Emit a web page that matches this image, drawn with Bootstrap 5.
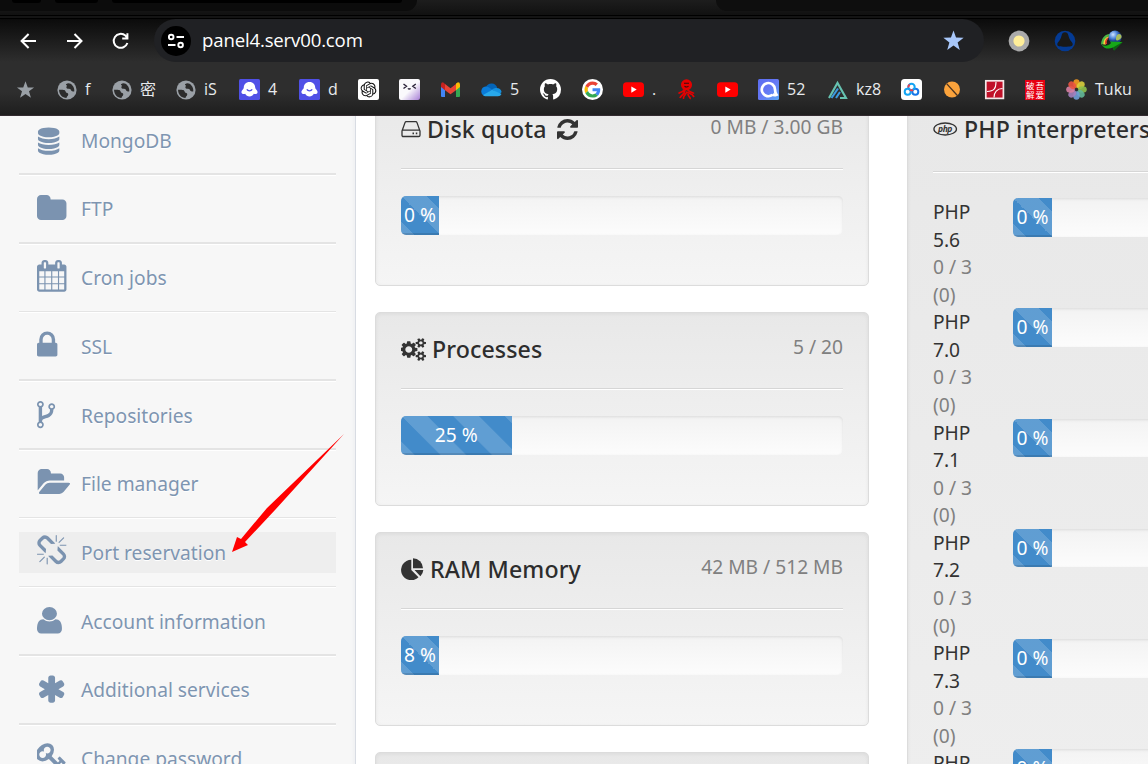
<!DOCTYPE html>
<html lang="en">
<head>
<meta charset="utf-8">
<title>panel4.serv00.com</title>
<link href="https://cdn.jsdelivr.net/npm/bootstrap@5.3.0/dist/css/bootstrap.min.css" rel="stylesheet">
<style>
body{width:1148px;height:764px;overflow:hidden;background:#fff;font-family:"Noto Sans","Noto Sans CJK SC",sans-serif;font-size:19.2px;line-height:27.57px;color:#333}
svg{display:block;flex:none}
.chrome{height:116px;background:linear-gradient(#0b0b0b 19px,#2e2e2e 62px,#2e2e2e 92px,#1e1e1e 115px,#332b30 115px);font-family:"Open Sans","Noto Sans CJK SC",sans-serif;color:#e8eaed}
.tabstrip{height:19px;background:linear-gradient(#1d1d1d,#111 15px,#000 15px,#000 16px,#141414 16px,#141414 18px,#000 18px);overflow:hidden}
.tab-a{width:417px;height:11px;background:#0c0c0c;border-bottom-right-radius:12px;padding-left:12px;gap:14px}
.tab-a i{height:3px;background:#000;border-radius:0 0 8px 8px}
.tab-a i:nth-child(1){width:29px}.tab-a i:nth-child(2){width:43px}.tab-a i:nth-child(3){width:290px}
.tab-b{width:432px;height:11px;background:#0e0e0e;border-bottom-left-radius:12px}
.toolbar{height:43px;padding-left:18px}
.reload{margin-left:25px}
.ext{margin-left:24px}
.omnibox{width:830px;height:43px;background:#202124;border-radius:22px;margin-left:23px;padding:0 20px 0 7px}
.site{width:30px;height:30px;border-radius:50%;background:#000}
.url{font-size:18.6px;line-height:41px;height:43px;margin-left:11px;color:#fff;letter-spacing:-.16px}
.marks{display:grid;grid-template-columns:42px 55px 64px 63px 60px 59px 41px 41px 41px 59px 42px 41px 54px 40px 41px 69px 74px 41px 42px 41px 41px 82px;padding:1px 0 0 15px;height:54px}
.marks>div{display:flex;align-items:center;gap:8px;font-size:16px;line-height:24px;white-space:nowrap}
.marks span{margin-top:-1px}
.viewport{height:648px;overflow:hidden}
.side{width:356px;background:#f7f7f7;border-right:1px solid #d8dce3;box-shadow:inset -5px 0 4px -4px #eceef1;padding:0 19px;height:700px}
.side ul{margin-top:-11.53px}
.side .rule{height:2.55px;background:#e4e4e4;border-bottom:1px solid #fff;width:317px}
.side .entry{height:66.195px;width:317px;padding:12.2px 0 12.7px}
.side a{height:41.25px;padding-left:18px;gap:10px;color:#7e95b1;text-decoration:none;text-shadow:0 1px 0 #fff}
.side a.hot{background:#eee}
.side a svg{fill:#7b93b0}
.side a span{padding-top:1px}
.box{background:linear-gradient(#e8e8e8,#f5f5f5);border:1px solid #dcdcdc;border-radius:5px;box-shadow:inset 0 1px 4px rgba(0,0,0,.06);padding:0 25px}
.mid{width:494px;margin:-24px 0 0 19px}
.mid .box{height:194px;margin-bottom:26px}
.php{width:420px;margin:-24px 0 0 38px;flex:none}
.php .box{height:1500px}
.head{height:76px;border-bottom:1px solid #d6d6d6;box-shadow:0 1px 0 #fff;padding-top:20px}
.head h3{font-size:23.2px;font-weight:500;line-height:32px;height:32px;margin:0;gap:6px;color:#2d2d2d;letter-spacing:.1px;white-space:nowrap}
.head .amt{color:#808080;line-height:28px}
.meter{height:38.5px;background:linear-gradient(#f3f3f3,#fcfcfc);border-radius:5px;box-shadow:inset 0 1px 3px rgba(0,0,0,.1);overflow:hidden}
.mid .meter{margin-top:27px}
.fillbar{min-width:38px;background:#428bca linear-gradient(45deg,rgba(255,255,255,.16) 25%,transparent 25%,transparent 50%,rgba(255,255,255,.16) 50%,rgba(255,255,255,.16) 75%,transparent 75%) 0 0/51.6px 51.6px;box-shadow:inset 0 -2px 0 rgba(0,0,0,.12);color:#fff;text-align:center;line-height:38px}
.mid .fillbar{line-height:37px}
.php .fillbar{min-width:39px}
.php .head{height:79px}
.php .rowx{height:110.3px;gap:33px}
.php .lbl{width:47px;flex:none;color:#333}
.php .lbl span{color:#808080}
.php .rows{padding-top:26px}
.php .meter{width:260px;flex:none}
.arrow{position:absolute;left:225px;top:428px}
</style>
</head>
<body>
<header class="chrome">
  <div class="tabstrip d-flex justify-content-between"><div class="tab-a d-flex"><i></i><i></i><i></i></div><div class="tab-b"></div></div>
  <div class="toolbar d-flex align-items-center">
    <svg width="21" height="21" viewBox="0 0 21 21" fill="none" stroke="#fff" stroke-width="2"><path d="M18 11H4M10.600 4L3.600 11l7 7"/></svg>
    <svg class="ms-4" width="22" height="21" viewBox="0 0 22 21" fill="none" stroke="#fff" stroke-width="2"><path d="M4 11h14M11.500 4l7 7-7 7"/></svg>
    <svg class="reload" width="21" height="21" viewBox="0 0 21 21" fill="none" stroke="#fff" stroke-width="2"><path d="M17.400 13A7 7 0 1 1 15.400 5.600L17 7.500M17.400 3.200v5.200h-5.200"/></svg>
    <div class="omnibox d-flex align-items-center">
      <div class="site d-flex align-items-center justify-content-center"><svg width="18" height="16" viewBox="0 0 18 16" fill="none" stroke="#fff" stroke-width="1.900"><circle cx="4.200" cy="4" r="2.300"/><path d="M9.500 4H17M1 12h7.500"/><circle cx="13.600" cy="12" r="2.300"/></svg></div>
      <div class="url">panel4.serv00.com</div>
      <svg class="ms-auto" width="21" height="21" viewBox="0 0 24 24" fill="#a8c7fa"><path d="M12 .6l2.900 8 8.700.2-6.900 5.400 2.500 8.600-7.200-5-7.200 5 2.500-8.600L.4 8.800l8.700-.2z"/></svg>
    </div>
    <svg class="ext" width="22" height="22" viewBox="0 0 22 22"><circle cx="11" cy="11" r="10.400" fill="#aaa"/><circle cx="11" cy="11" r="5.600" fill="#ffee99"/></svg>
    <svg class="ext" width="22" height="22" viewBox="0 0 22 22"><circle cx="11" cy="11" r="10.300" fill="#043a93"/><path d="M11 2.300c2 0 2.800 1.200 3.400 3.200.8 3 1.400 4.400 3.300 6.500 1.600 1.800 1.300 3.800-.7 4.300-2.400.6-9.600.6-12 0-2-.5-2.300-2.500-.7-4.300 1.900-2.100 2.500-3.500 3.300-6.500.6-2 1.400-3.200 3.400-3.200z" fill="#191919"/></svg>
    <svg class="ext" width="23" height="22" viewBox="0 0 23 22"><defs><radialGradient id="earth" cx=".35" cy=".3"><stop stop-color="#cfe4ff"/><stop offset=".6" stop-color="#4f86d9"/><stop offset="1" stop-color="#1c3f8c"/></radialGradient></defs><circle cx="15" cy="7.200" r="6.600" fill="url(#earth)"/><path d="M17 5c2-2 4-1 4.500 1s-2 4-4 4.500-2-3-.5-5.500z" fill="#a9bd5c"/><path d="M1 14.500C1.500 7.500 5.500 4 9.500 4L8.700 6C5 7.500 4.500 11 4.500 14z" fill="#4db848"/><path d="M3.400 14.500c0-4.500 2-7.300 5.400-8.300l-.4 1.600c-2 1-3 3.700-2.400 6.700z" fill="#f0d83a"/><path d="M5 14c-.4-3.500 1-5.700 3.400-6.700L8 9c-1.200 1-1.600 3-1 5z" fill="#e5452b"/><path d="M1.500 14.500c3 2 7 1.500 9.500-1.500l-1-1.500 12.500.5-8.500 8.500-1-3c-4 2-9 1.500-11.500-3z" fill="#16a818"/><path d="M13 17.500l9.500-5.500-8.500 8.500z" fill="#0a6410"/></svg>
  </div>
  <nav class="marks">
    <div><svg width="21" height="21" viewBox="0 0 24 24" fill="#9aa0a6"><path d="M12 2.600l2.600 7h7.200l-5.800 4.500 2.200 7.200-6.200-4.300-6.200 4.300L8 14.100 2.200 9.600h7.200z"/></svg></div>
    <div><svg width="20" height="20" viewBox="0 0 20 20"><use href="#globe"/></svg><span>f</span></div>
    <div><svg width="20" height="20" viewBox="0 0 20 20"><use href="#globe"/></svg><span>密</span></div>
    <div><svg width="20" height="20" viewBox="0 0 20 20"><use href="#globe"/></svg><span>iS</span></div>
    <div><svg width="21" height="21" viewBox="0 0 21 21"><use href="#ghost"/></svg><span>4</span></div>
    <div><svg width="21" height="21" viewBox="0 0 21 21"><use href="#ghost"/></svg><span>d</span></div>
    <div><svg width="21" height="21" viewBox="-4 -4 32 32"><rect x="-4" y="-4" width="32" height="32" rx="3" fill="#fff"/><path d="M22.2819 9.8211a5.9847 5.9847 0 0 0-.5157-4.9108 6.0462 6.0462 0 0 0-6.5098-2.9A6.0651 6.0651 0 0 0 4.9807 4.1818a5.9847 5.9847 0 0 0-3.9977 2.9 6.0462 6.0462 0 0 0 .7427 7.0966 5.98 5.98 0 0 0 .511 4.9107 6.051 6.051 0 0 0 6.5146 2.9001A5.9847 5.9847 0 0 0 13.2599 24a6.0557 6.0557 0 0 0 5.7718-4.2058 5.9894 5.9894 0 0 0 3.9977-2.9001 6.0557 6.0557 0 0 0-.7475-7.0729zm-9.022 12.6081a4.4755 4.4755 0 0 1-2.8764-1.0408l.1419-.0804 4.7783-2.7582a.7948.7948 0 0 0 .3927-.6813v-6.7369l2.02 1.1686a.071.071 0 0 1 .038.052v5.5826a4.504 4.504 0 0 1-4.4945 4.4944zm-9.6607-4.1254a4.4708 4.4708 0 0 1-.5346-3.0137l.142.0852 4.783 2.7582a.7712.7712 0 0 0 .7806 0l5.8428-3.3685v2.3324a.0804.0804 0 0 1-.0332.0615L9.74 19.9502a4.4992 4.4992 0 0 1-6.1408-1.6464zM2.3408 7.8956a4.485 4.485 0 0 1 2.3655-1.9728V11.6a.7664.7664 0 0 0 .3879.6765l5.8144 3.3543-2.0201 1.1685a.0757.0757 0 0 1-.071 0l-4.8303-2.7865A4.504 4.504 0 0 1 2.3408 7.872zm16.5963 3.8558L13.1038 8.364 15.1192 7.2a.0757.0757 0 0 1 .071 0l4.8303 2.7913a4.4944 4.4944 0 0 1-.6765 8.1042v-5.6772a.79.79 0 0 0-.407-.667zm2.0107-3.0231l-.142-.0852-4.7735-2.7818a.7759.7759 0 0 0-.7854 0L9.409 9.2297V6.8974a.0662.0662 0 0 1 .0284-.0615l4.8303-2.7866a4.4992 4.4992 0 0 1 6.6802 4.66zM8.3065 12.863l-2.02-1.1638a.0804.0804 0 0 1-.038-.0567V6.0742a4.4992 4.4992 0 0 1 7.3757-3.4537l-.142.0805L8.704 5.459a.7948.7948 0 0 0-.3927.6813zm1.0976-2.3654l2.602-1.4998 2.6069 1.4998v2.9994l-2.5974 1.4997-2.6067-1.4997Z" fill="#111"/></svg></div>
    <div><svg width="21" height="21" viewBox="0 0 21 21"><defs><linearGradient id="lav" x1=".4" y1=".4" x2="1" y2="1"><stop offset=".2" stop-color="#faf9fc"/><stop offset="1" stop-color="#a77fd6"/></linearGradient></defs><rect width="21" height="21" rx="2" fill="url(#lav)"/><path d="M4.500 5l3 2.300-3 2.200M16.800 5l-3 2.300 3 2.200M9 9.300c.6 1 1.900 1 2.500 0" fill="none" stroke="#2a2238" stroke-width="1.400"/></svg></div>
    <div><svg width="21" height="21" viewBox="0 0 21 21"><path d="M1 6v11q0 1 1 1h3V9z" fill="#4285f4"/><path d="M20 6v11q0 1-1 1h-3V9z" fill="#34a853"/><path d="M16 4.500l2-1.200q2 0 2 2.200V8l-4 3.200z" fill="#fbbc04"/><path d="M5 11.200V5l5.500 4.200L16 5v6.200l-5.500 4z" fill="#ea4335"/><path d="M1 8V5.500Q1 3.300 3 3.300L5 5v6.200z" fill="#c5221f"/></svg></div>
    <div><svg width="21" height="21" viewBox="0 0 21 21"><path d="M5 8a6 6 0 0 1 11.200.6L11 13z" fill="#0364b8"/><path d="M4.500 7.600c2 0 3 .6 6.500 3L3 17A5 5 0 0 1 4.500 7.600z" fill="#0a7bd8"/><path d="M11 10.500c2-2 9-3 9.600 2.500L18 16z" fill="#1490df"/><path d="M2.200 16L11 10.800 20.500 15q-1 2.300-3.500 2.300H4.500q-1.500 0-2.300-1.300z" fill="#28a8ea"/></svg><span>5</span></div>
    <div><svg width="21" height="21" viewBox="0 0 16 16" fill="#fff"><path d="M8 0C3.580 0 0 3.580 0 8c0 3.540 2.290 6.530 5.470 7.590.4.070.55-.17.55-.38 0-.19-.01-.82-.01-1.490-2.010.37-2.530-.49-2.690-.94-.09-.23-.48-.94-.82-1.130-.28-.15-.68-.52-.01-.53.63-.01 1.080.58 1.230.82.720 1.210 1.870.87 2.330.66.07-.52.28-.87.51-1.070-1.780-.2-3.640-.89-3.640-3.950 0-.87.31-1.590.82-2.150-.08-.2-.36-1.020.08-2.120 0 0 .67-.21 2.200.82.64-.18 1.320-.27 2-.27s1.360.09 2 .27c1.530-1.040 2.200-.82 2.200-.82.44 1.100.16 1.920.08 2.120.51.56.82 1.270.82 2.150 0 3.070-1.870 3.750-3.650 3.950.29.25.54.73.54 1.480 0 1.070-.01 1.930-.01 2.200 0 .21.15.46.55.38A8.010 8.010 0 0 0 16 8c0-4.420-3.580-8-8-8z"/></svg></div>
    <div><svg width="21" height="21" viewBox="0 0 42 42"><circle cx="21" cy="21" r="21" fill="#fff"/><g transform="translate(5 5) scale(.67)"><path fill="#EA4335" d="M24 9.500c3.540 0 6.710 1.220 9.210 3.600l6.850-6.850C35.900 2.380 30.470 0 24 0 14.620 0 6.510 5.380 2.560 13.220l7.980 6.190C12.430 13.720 17.740 9.500 24 9.500z"/><path fill="#4285F4" d="M46.980 24.550c0-1.570-.15-3.090-.38-4.550H24v9.020h12.940c-.58 2.960-2.260 5.480-4.780 7.180l7.730 6c4.510-4.180 7.090-10.360 7.090-17.650z"/><path fill="#FBBC05" d="M10.530 28.590c-.48-1.450-.76-2.990-.76-4.590s.27-3.140.76-4.590l-7.980-6.190C.92 16.460 0 20.120 0 24c0 3.880.92 7.540 2.560 10.780l7.970-6.190z"/><path fill="#34A853" d="M24 48c6.480 0 11.930-2.130 15.890-5.810l-7.730-6c-2.150 1.450-4.920 2.300-8.160 2.300-6.260 0-11.570-4.220-13.470-9.910l-7.980 6.190C6.510 42.620 14.620 48 24 48z"/></g></svg></div>
    <div><svg width="21" height="21" viewBox="0 0 21 21"><use href="#yt"/></svg><span>.</span></div>
    <div><svg width="19" height="21" viewBox="0 0 19 21" fill="none" stroke="#e60000" stroke-width="1.700"><circle cx="9.500" cy="5.800" r="4.700" fill="#e60000"/><path d="M6 10.500c2 2.500-2.500 2-4.500 4M8 11c0 5-3.500 4-5 8M10.500 10.500c2.500 3.500 4.500 2 6.500 4M9 13c4 2 6 1 8 5M9 14c-1 3-3 3-2.500 6M11 15c0 3 3 3 2 5"/><path d="M7 4.200h5M7.500 7.200c1.500 1 3 1 4 0" stroke="#3a0d0d" stroke-width="1.100"/></svg></div>
    <div><svg width="21" height="21" viewBox="0 0 21 21"><use href="#yt"/></svg></div>
    <div><svg width="21" height="21" viewBox="0 0 21 21"><defs><linearGradient id="ind" x2="1" y2="1"><stop stop-color="#5b6df0"/><stop offset=".5" stop-color="#6678f4"/><stop offset="1" stop-color="#57a6f5"/></linearGradient></defs><rect width="21" height="21" rx="1.500" fill="url(#ind)"/><path d="M14.500 15.800A6.600 6.600 0 1 1 17 10.500q0 3 1.500 5.200-2.500 1-4-.5" fill="none" stroke="#fff" stroke-width="2.700"/></svg><span>52</span></div>
    <div><svg width="21" height="21" viewBox="0 0 21 21" fill="none" stroke-width="2.100"><path d="M2 19L10.500 4 19 19h-6" stroke="#66c2b0"/><path d="M4.500 19L11 9.500M9 19l4-6" stroke="#3b9ae0"/></svg><span>kz8</span></div>
    <div><svg width="21" height="21" viewBox="0 0 21 21"><rect width="21" height="21" rx="3.500" fill="#fff"/><g fill="none" stroke-width="2"><circle cx="6.700" cy="12.800" r="3" stroke="#13a6f5"/><circle cx="14.300" cy="12.800" r="3" stroke="#1677e8"/><circle cx="10.500" cy="8" r="3.200" stroke="#12a3f2"/><path d="M9 10.700c1 .8 2 .8 3 0" stroke="#ee3f4d"/><path d="M7.400 8.500a3.200 3.200 0 0 1 1.300-3" stroke="#ee3f4d"/></g></svg></div>
    <div><svg width="21" height="21" viewBox="0 0 21 21"><circle cx="10" cy="10.500" r="8" fill="#fba33c"/><path d="M4.600 4.600L15.800 17" stroke="#4a3320" stroke-width="1.300"/></svg></div>
    <div><svg width="21" height="21" viewBox="0 0 21 21"><rect x="1.800" y="1.800" width="17.600" height="17.600" fill="#c01028" stroke="#f4e8e8" stroke-width="1.700"/><path d="M3 12.500c7 0 9-3 9-9.500M10 18.500c0-5 3-9 8.500-9" fill="none" stroke="#fff" stroke-width="1.100"/></svg></div>
    <div><svg width="20" height="20" viewBox="0 0 20 20"><rect width="20" height="20" fill="#e60012"/><g fill="#fff" font-size="8.500" font-family="Noto Sans CJK SC"><text x="1" y="8.500">破</text><text x="10.500" y="8.500">吾</text><text x="1" y="18">解</text><text x="10.500" y="18">爱</text></g></svg></div>
    <div><svg width="21" height="21" viewBox="-10.500 -10.500 21 21" fill-opacity=".9"><ellipse cy="-6" rx="3.300" ry="4.300" fill="#f79a20"/><ellipse cy="-6" rx="3.300" ry="4.300" fill="#d9cf3c" transform="rotate(45)"/><ellipse cy="-6" rx="3.300" ry="4.300" fill="#8dc04b" transform="rotate(90)"/><ellipse cy="-6" rx="3.300" ry="4.300" fill="#63b898" transform="rotate(135)"/><ellipse cy="-6" rx="3.300" ry="4.300" fill="#6f9fd6" transform="rotate(180)"/><ellipse cy="-6" rx="3.300" ry="4.300" fill="#a47fbd" transform="rotate(225)"/><ellipse cy="-6" rx="3.300" ry="4.300" fill="#d77fa3" transform="rotate(270)"/><ellipse cy="-6" rx="3.300" ry="4.300" fill="#ec5340" transform="rotate(315)"/></svg><span>Tuku</span></div>
  </nav>
</header>

<main class="viewport d-flex">
  <aside class="side flex-shrink-0">
    <ul class="list-unstyled mb-0">
      <li class="rule"></li>
      <li class="entry"><a href="#" class="d-flex align-items-center"><svg width="34" height="34"><path transform="translate(-.8 4.500) scale(.0139 .0152)" d="M896 768q237 0 443-43t325-127v170q0 69-103 128t-280 93.500-385 34.500-385-34.500-280-93.500-103-128v-170q119 84 325 127t443 43zm0 768q237 0 443-43t325-127v170q0 69-103 128t-280 93.500-385 34.500-385-34.500-280-93.500-103-128v-170q119 84 325 127t443 43zm0-384q237 0 443-43t325-127v170q0 69-103 128t-280 93.500-385 34.500-385-34.500-280-93.500-103-128v-170q119 84 325 127t443 43zm0-1152q208 0 385 34.500t280 93.500 103 128v128q0 69-103 128t-280 93.500-385 34.500-385-34.500-280-93.500-103-128v-128q0-69 103-128t280-93.500 385-34.500z"/></svg><span>MongoDB</span></a></li>
      <li class="rule"></li>
      <li class="entry"><a href="#" class="d-flex align-items-center"><svg width="34" height="34"><path transform="translate(-1.130 .7) scale(.0177)" d="M1728 608v704q0 92-66 158t-158 66h-1216q-92 0-158-66t-66-158v-960q0-92 66-158t158-66h320q92 0 158 66t66 158v32h672q92 0 158 66t66 158z"/></svg><span>FTP</span></a></li>
      <li class="rule"></li>
      <li class="entry"><a href="#" class="d-flex align-items-center"><svg width="34" height="34"><path transform="translate(-1.130 0) scale(.0177)" d="M192 1664h288v-288h-288v288zm352 0h320v-288h-320v288zm-352-352h288v-320h-288v320zm352 0h320v-320h-320v320zm-352-384h288v-288h-288v288zm736 736h320v-288h-320v288zm-384-736h320v-288h-320v288zm768 736h288v-288h-288v288zm-384-352h320v-320h-320v320zm-352-864v-288q0-13-9.500-22.500t-22.500-9.500h-64q-13 0-22.500 9.500t-9.500 22.500v288q0 13 9.500 22.500t22.500 9.500h64q13 0 22.500-9.500t9.500-22.500zm736 864h288v-320h-288v320zm-384-384h320v-288h-320v288zm384 0h288v-288h-288v288zm32-480v-288q0-13-9.500-22.500t-22.500-9.500h-64q-13 0-22.500 9.500t-9.500 22.500v288q0 13 9.500 22.500t22.500 9.500h64q13 0 22.500-9.500t9.500-22.500zm384-64v1280q0 52-38 90t-90 38h-1408q-52 0-90-38t-38-90v-1280q0-52 38-90t90-38h128v-96q0-66 47-113t113-47h64q66 0 113 47t47 113v96h384v-96q0-66 47-113t113-47h64q66 0 113 47t47 113v96h128q52 0 90 38t38 90z"/></svg><span>Cron jobs</span></a></li>
      <li class="rule"></li>
      <li class="entry"><a href="#" class="d-flex align-items-center"><svg width="34" height="34"><path transform="translate(-5.660 .2) scale(.0177)" d="M640 768h512v-192q0-106-75-181t-181-75-181 75-75 181v192zm832 96v576q0 40-28 68t-68 28h-960q-40 0-68-28t-28-68v-576q0-40 28-68t68-28h32v-192q0-184 132-316t316-132 316 132 132 316v192h32q40 0 68 28t28 68z"/></svg><span>SSL</span></a></li>
      <li class="rule"></li>
      <li class="entry"><a href="#" class="d-flex align-items-center"><svg width="34" height="34"><path transform="translate(-6.800 .7) scale(.0177)" d="M672 1472q0-40-28-68t-68-28-68 28-28 68 28 68 68 28 68-28 28-68zm0-1152q0-40-28-68t-68-28-68 28-28 68 28 68 68 28 68-28 28-68zm640 128q0-40-28-68t-68-28-68 28-28 68 28 68 68 28 68-28 28-68zm96 0q0 52-26 96.500t-70 69.500q-2 287-226 414-67 38-203 81-128 40-169.500 71t-41.500 100v26q44 25 70 69.500t26 96.500q0 80-56 136t-136 56-136-56-56-136q0-52 26-96.500t70-69.500v-820q-44-25-70-69.500t-26-96.500q0-80 56-136t136-56 136 56 56 136q0 52-26 96.500t-70 69.500v497q54-26 154-57 55-17 87.500-29.500t70.500-31 59-39.500 40.500-51 28-69.500 8.500-91.500q-44-25-70-69.500t-26-96.500q0-80 56-136t136-56 136 56 56 136z"/></svg><span>Repositories</span></a></li>
      <li class="rule"></li>
      <li class="entry"><a href="#" class="d-flex align-items-center"><svg width="34" height="34"><path transform="translate(-.4 -.2) scale(.0172 .0177)" d="M1943 952q0 31-31 66l-336 396q-43 51-120.500 86.500t-143.500 35.500h-1088q-34 0-60.500-13t-26.500-43q0-31 31-66l336-396q43-51 120.500-86.500t143.500-35.500h1088q34 0 60.500 13t26.500 43zm-343-344v160h-832q-94 0-197 47.500t-164 119.500l-337 396-5 6q0-4-.5-12.500t-.5-12.500v-960q0-92 66-158t158-66h320q92 0 158 66t66 158v32h544q92 0 158 66t66 158z"/></svg><span>File manager</span></a></li>
      <li class="rule"></li>
      <li class="entry"><a href="#" class="hot d-flex align-items-center"><svg width="34" height="34"><path transform="translate(-1.130 0) scale(.0177)" d="M503 1271l-256 256q-10 9-23 9-12 0-23-9-9-10-9-23t9-23l256-256q10-9 23-9t23 9q9 10 9 23t-9 23zm169 41v320q0 14-9 23t-23 9-23-9-9-23v-320q0-14 9-23t23-9 23 9 9 23zm-224-224q0 14-9 23t-23 9h-320q-14 0-23-9t-9-23 9-23 23-9h320q14 0 23 9t9 23zm1264 128q0 120-85 203l-147 146q-83 83-203 83-121 0-204-85l-334-335q-21-21-42-56l239-18 273 274q28 28 68 27.500t68-27.500l147-146q28-28 28-67 0-40-28-68l-274-275 18-239q35 21 56 42l336 336q84 86 84 204zm-617-724l-239 18-273-274q-28-28-68-28-39 0-68 27l-147 146q-28 28-28 67 0 40 28 68l274 274-18 240q-35-21-56-42l-336-336q-84-86-84-204 0-120 85-203l147-146q83-83 203-83 121 0 204 85l334 335q21 21 42 56zm633 84q0 14-9 23t-23 9h-320q-14 0-23-9t-9-23 9-23 23-9h320q14 0 23 9t9 23zm-544-544v320q0 14-9 23t-23 9-23-9-9-23v-320q0-14 9-23t23-9 23 9 9 23zm407 151l-256 256q-11 9-23 9t-23-9q-9-10-9-23t9-23l256-256q10-9 23-9t23 9q9 10 9 23t-9 23z"/></svg><span>Port reservation</span></a></li>
      <li class="rule"></li>
      <li class="entry"><a href="#" class="d-flex align-items-center"><svg width="34" height="34"><path transform="translate(-5 .8) scale(.0195 .0173)" d="M1536 1399q0 109-62.500 187t-150.500 78h-854q-88 0-150.500-78t-62.500-187q0-85 8.500-160.500t31.500-152 58.500-131 94-89 134.500-34.500q131 128 313 128t313-128q76 0 134.500 34.500t94 89 58.500 131 31.500 152 8.500 160.500zm-256-887q0 159-112.500 271.500t-271.500 112.500-271.500-112.500-112.500-271.500 112.500-271.500 271.500-112.500 271.500 112.500 112.500 271.500z"/></svg><span>Account information</span></a></li>
      <li class="rule"></li>
      <li class="entry"><a href="#" class="d-flex align-items-center"><svg width="34" height="34"><path transform="translate(-1.200 .3) scale(.0177)" d="M1546 1050q46 26 59.500 77.500t-12.500 97.500l-64 110q-26 46-77.500 59.500t-97.500-12.500l-266-153v307q0 52-38 90t-90 38h-128q-52 0-90-38t-38-90v-307l-266 153q-46 26-97.500 12.500t-77.500-59.500l-64-110q-26-46-12.500-97.500t59.500-77.500l266-154-266-154q-46-26-59.500-77.500t12.500-97.500l64-110q26-46 77.500-59.500t97.500 12.500l266 153v-307q0-52 38-90t90-38h128q52 0 90 38t38 90v307l266-153q46-26 97.500-12.500t77.500 59.500l64 110q26 46 12.500 97.500t-59.500 77.500l-266 154z"/></svg><span>Additional services</span></a></li>
      <li class="rule"></li>
      <li class="entry"><a href="#" class="d-flex align-items-center"><svg width="34" height="34"><path transform="translate(-1.130 0) scale(.0177)" d="M832 512q0-80-56-136t-136-56-136 56-56 136q0 42 19 83-41-19-83-19-80 0-136 56t-56 136 56 136 136 56 136-56 56-136q0-42-19-83 41 19 83 19 80 0 136-56t56-136zm851 704q0 17-49 66t-66 49q-9 0-28.500-16t-36.500-33-38.500-40-24.500-26l-96 96 220 220q28 28 28 68 0 42-39 81t-81 39q-40 0-68-28l-671-671q-176 131-365 131-163 0-265.500-102.500t-102.500-265.500q0-160 95-313t248-248 313-95q163 0 265.500 102.500t102.500 265.500q0 189-131 365l355 355 96-96q-3-3-26-24.500t-40-38.500-33-36.500-16-28.500q0-17 49-66t66-49q13 0 23 10 6 6 46 44.500t82 79.500 86.500 86 73 78 28.500 41z"/></svg><span>Change password</span></a></li>
    </ul>
  </aside>

  <section class="mid flex-shrink-0">
    <div class="box">
      <div class="head d-flex justify-content-between">
        <h3 class="d-flex align-items-center"><svg width="20" height="18" viewBox="0 0 20 18" fill="none" stroke="#333" stroke-width="1.300"><path d="M1 11L4 2.600Q4.300 1.600 5.300 1.600h9.400q1 0 1.300 1L19 11v4.200q0 1.300-1.300 1.300H2.300Q1 16.500 1 15.200zM1.200 10.200h17.600"/><path d="M11.500 13.300h1.500M14.800 13.300h1.500" stroke-width="1.800"/></svg><span>Disk quota</span><svg class="ms-1" width="21" height="21" viewBox="128 128 1536 1536" fill="#333"><path d="M1639 1056q0 5-1 7-64 268-268 434.500t-478 166.500q-146 0-282.500-55t-243.500-157l-129 129q-19 19-45 19t-45-19-19-45v-448q0-26 19-45t45-19h448q26 0 45 19t19 45-19 45l-137 137q71 66 161 102t187 36q134 0 250-65t186-179q11-17 53-117 8-23 30-23h192q13 0 22.500 9.500t9.500 22.500zm25-800v448q0 26-19 45t-45 19h-448q-26 0-45-19t-19-45 19-45l138-138q-148-137-349-137-134 0-250 65t-186 179q-11 17-53 117-8 23-30 23h-199q-13 0-22.500-9.500t-9.500-22.500v-7q65-268 270-434.500t480-166.500q146 0 284 55.500t245 156.500l130-129q19-19 45-19t45 19 19 45z"/></svg></h3>
        <div class="amt">0 MB / 3.00 GB</div>
      </div>
      <div class="meter"><div class="fillbar h-100" style="width:0%">0 %</div></div>
    </div>
    <div class="box">
      <div class="head d-flex justify-content-between">
        <h3 class="d-flex align-items-center"><svg width="25" height="23" viewBox="0 0 1856 1792" preserveAspectRatio="none" fill="#333"><path d="M832 896q0-106-75-181t-181-75-181 75-75 181 75 181 181 75 181-75 75-181zm768 512q0-52-38-90t-90-38-90 38-38 90q0 53 37.500 90.500t90.500 37.500 90.500-37.500 37.500-90.500zm0-1024q0-52-38-90t-90-38-90 38-38 90q0 53 37.500 90.500t90.500 37.500 90.500-37.500 37.500-90.500zm-384 421v185q0 10-7 19.500t-16 10.500l-155 24q-11 35-32 76 34 48 90 115 7 11 7 20 0 12-7 19-23 30-82.500 89.500t-78.500 59.500q-11 0-21-7l-115-90q-37 19-77 31-11 108-23 155-7 24-30 24h-186q-11 0-20-7.500t-10-17.500l-23-153q-34-10-75-31l-118 89q-7 7-20 7-11 0-21-8-144-133-144-160 0-9 7-19 10-14 41-53t47-61q-23-44-35-82l-152-24q-10-1-17-9.500t-7-19.500v-185q0-10 7-19.500t16-10.500l155-24q11-35 32-76-34-48-90-115-7-11-7-20 0-12 7-20 22-30 82-89t79-59q11 0 21 7l115 90q34-18 77-32 11-108 23-154 7-24 30-24h186q11 0 20 7.500t10 17.500l23 153q34 10 75 31l118-89q8-7 20-7 11 0 21 8 144 133 144 160 0 8-7 19-12 16-42 54t-45 60q23 48 34 82l152 23q10 2 17 10.500t7 19.500zm640 533v140q0 16-149 31-12 27-30 52 51 113 51 138 0 4-4 7-122 71-124 71-8 0-46-47t-52-68q-20 2-30 2t-30-2q-14 21-52 68t-46 47q-2 0-124-71-4-3-4-7 0-25 51-138-18-25-30-52-149-15-149-31v-140q0-16 149-31 13-29 30-52-51-113-51-138 0-4 4-7 4-2 35-20t59-34 30-16q8 0 46 46.500t52 67.500q20-2 30-2t30 2q51-71 92-112l6-2q4 0 124 70 4 3 4 7 0 25-51 138 17 23 30 52 149 15 149 31zm0-1024v140q0 16-149 31-12 27-30 52 51 113 51 138 0 4-4 7-122 71-124 71-8 0-46-47t-52-68q-20 2-30 2t-30-2q-14 21-52 68t-46 47q-2 0-124-71-4-3-4-7 0-25 51-138-18-25-30-52-149-15-149-31v-140q0-16 149-31 13-29 30-52-51-113-51-138 0-4 4-7 4-2 35-20t59-34 30-16q8 0 46 46.500t52 67.500q20-2 30-2t30 2q51-71 92-112l6-2q4 0 124 70 4 3 4 7 0 25-51 138 17 23 30 52 149 15 149 31z"/></svg><span>Processes</span></h3>
        <div class="amt">5 / 20</div>
      </div>
      <div class="meter"><div class="fillbar h-100" style="width:25%">25 %</div></div>
    </div>
    <div class="box">
      <div class="head d-flex justify-content-between">
        <h3 class="d-flex align-items-center"><svg width="23" height="22" viewBox="0 0 23 22" fill="#333"><path d="M10.300 1.800V12l7.200 7.200A10.200 10.200 0 1 1 10.300 1.800z"/><path d="M12 .3A10 10 0 0 1 22 10.300H12z"/><path d="M13.500 12H22.300a10 10 0 0 1-2.900 6.300z"/></svg><span>RAM Memory</span></h3>
        <div class="amt">42 MB / 512 MB</div>
      </div>
      <div class="meter"><div class="fillbar h-100" style="width:8%">8 %</div></div>
    </div>
    <div class="box"></div>
  </section>

  <section class="php">
    <div class="box">
      <div class="head"><h3 class="d-flex align-items-center"><svg width="25" height="14" viewBox="0 0 25 14"><ellipse cx="12.200" cy="7" rx="11.300" ry="6" fill="none" stroke="#333" stroke-width="1.300"/><text x="12" y="9.500" text-anchor="middle" font-size="8.500" font-weight="700" font-style="italic" fill="#333" letter-spacing="-.4">php</text></svg><span>PHP interpreters</span></h3></div>
      <div class="rows">
        <div class="rowx d-flex"><div class="lbl">PHP<br>5.6<br><span>0 / 3<br>(0)</span></div><div class="meter"><div class="fillbar h-100" style="width:0%">0 %</div></div></div>
        <div class="rowx d-flex"><div class="lbl">PHP<br>7.0<br><span>0 / 3<br>(0)</span></div><div class="meter"><div class="fillbar h-100" style="width:0%">0 %</div></div></div>
        <div class="rowx d-flex"><div class="lbl">PHP<br>7.1<br><span>0 / 3<br>(0)</span></div><div class="meter"><div class="fillbar h-100" style="width:0%">0 %</div></div></div>
        <div class="rowx d-flex"><div class="lbl">PHP<br>7.2<br><span>0 / 3<br>(0)</span></div><div class="meter"><div class="fillbar h-100" style="width:0%">0 %</div></div></div>
        <div class="rowx d-flex"><div class="lbl">PHP<br>7.3<br><span>0 / 3<br>(0)</span></div><div class="meter"><div class="fillbar h-100" style="width:0%">0 %</div></div></div>
        <div class="rowx d-flex"><div class="lbl">PHP<br>7.4<br><span>0 / 3<br>(0)</span></div><div class="meter"><div class="fillbar h-100" style="width:0%">0 %</div></div></div>
      </div>
    </div>
  </section>
</main>

<svg class="arrow" width="125" height="130" viewBox="225 428 125 130" fill="#f00"><path d="M344 434L267 508 241 539 237 537 232 552 248 545 245 542 275 510z"/></svg>

<svg width="0" height="0" class="position-absolute"><defs>
  <g id="globe"><circle cx="10" cy="10" r="9.600" fill="#9aa0a6"/><path d="M9 4.200c2.500-1.700 5-.5 6 .8 2.400 2.500 2.500 5 2.200 6.500-1.500 0-3-.3-3.300-1.800-.7-1.200-3.200-.2-4.200-1.400-.9-1.400.3-1.800.2-2.600-.2-.7-1.200-.6-.9-1.500zM2 9.800c2 0 5-.3 6 .7 1 .9.4 1.900 1.500 2.200 1.400.4 2 .8 1.700 2-.3 1.500-1.500 1.500-1.700 3.200-4 0-7.300-3-7.500-8.100z" fill="#2c2c2c"/></g>
  <g id="ghost"><rect width="21" height="21" rx="1.500" fill="#5050e6"/><path d="M10.500 3c3.700 0 5.700 2.600 5.700 5.600 0 1.900 2.800 2.700 2.300 4.900-.3 1.500-2.200 1.800-3.700 1.300-.9 1.700-2.500 2.700-4.300 2.700s-3.400-1-4.300-2.700c-1.500.5-3.400.2-3.700-1.300-.5-2.200 2.300-3 2.300-4.900C4.800 5.600 6.800 3 10.500 3z" fill="#fff"/><path d="M7.800 10.400c1.300 1.900 4.100 1.900 5.400 0" fill="none" stroke="#5050e6" stroke-width="1.300"/></g>
  <g id="yt"><rect y="3.200" width="21" height="14.800" rx="3.500" fill="#f00"/><path d="M8.300 7.500v6.200l5.400-3.100z" fill="#fff"/></g>
</defs></svg>
<script src="https://cdn.jsdelivr.net/npm/bootstrap@5.3.0/dist/js/bootstrap.bundle.min.js"></script>
</body>
</html>
